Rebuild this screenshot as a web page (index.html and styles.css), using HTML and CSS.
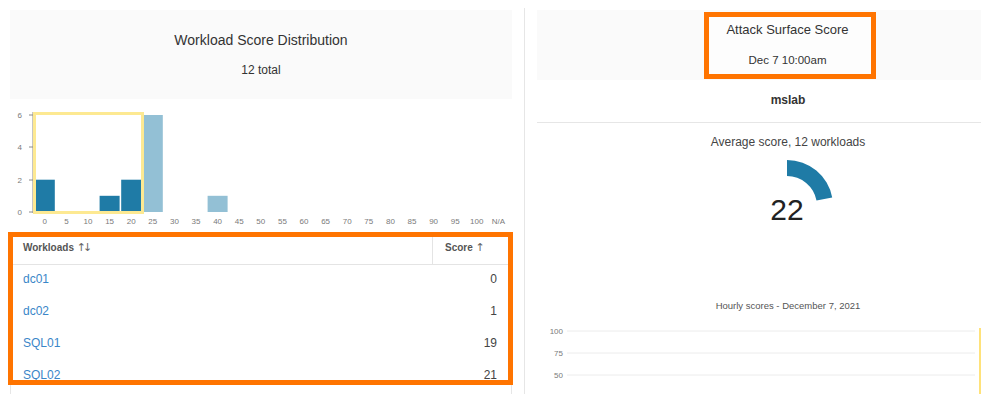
FILE: index.html
```html
<!DOCTYPE html>
<html lang="en">
<head>
    <meta charset="UTF-8">
    <meta name="viewport" content="width=device-width, initial-scale=1.0">
    <title>Workload Scores</title>
    <link rel="stylesheet" href="styles.css">
</head>
<body>
    <div class="page">
        <!-- Left: score distribution -->
        <section class="col col-left">
            <div class="card-head">
                <div class="card-title">Workload Score Distribution</div>
                <div class="card-sub">12 total</div>
            </div>

            <svg class="histogram" width="502" height="128" viewBox="10 102 502 128">
                <g class="axis">
                    <line x1="33" y1="112" x2="33" y2="213"></line>
                    <line x1="29" y1="115" x2="33" y2="115"></line>
                    <line x1="29" y1="147" x2="33" y2="147"></line>
                    <line x1="29" y1="180" x2="33" y2="180"></line>
                    <line x1="29" y1="212" x2="33" y2="212"></line>
                </g>
                <g class="tick-labels" text-anchor="end">
                    <text x="22" y="118">6</text>
                    <text x="22" y="150">4</text>
                    <text x="22" y="183">2</text>
                    <text x="22" y="215">0</text>
                </g>
                <g class="bars">
                    <rect class="bar-dark" x="34.8" y="179.7" width="20" height="32.3"></rect>
                    <rect class="bar-dark" x="99.6" y="195.8" width="20" height="16.2"></rect>
                    <rect class="bar-dark" x="121.2" y="179.7" width="20" height="32.3"></rect>
                    <rect class="bar-light" x="142.8" y="115" width="20" height="97"></rect>
                    <rect class="bar-light" x="207.6" y="195.8" width="20" height="16.2"></rect>
                </g>
                <g class="tick-labels" text-anchor="middle">
                    <text x="44.8" y="224">0</text>
                    <text x="66.4" y="224">5</text>
                    <text x="88" y="224">10</text>
                    <text x="109.6" y="224">15</text>
                    <text x="131.2" y="224">20</text>
                    <text x="152.8" y="224">25</text>
                    <text x="174.4" y="224">30</text>
                    <text x="196" y="224">35</text>
                    <text x="217.6" y="224">40</text>
                    <text x="239.2" y="224">45</text>
                    <text x="260.8" y="224">50</text>
                    <text x="282.4" y="224">55</text>
                    <text x="304" y="224">60</text>
                    <text x="325.6" y="224">65</text>
                    <text x="347.2" y="224">70</text>
                    <text x="368.8" y="224">75</text>
                    <text x="390.4" y="224">80</text>
                    <text x="412" y="224">85</text>
                    <text x="433.6" y="224">90</text>
                    <text x="455.2" y="224">95</text>
                    <text x="476.8" y="224">100</text>
                    <text x="498.4" y="224">N/A</text>
                </g>
                <!-- brush selection -->
                <rect class="brush" x="34.5" y="113.5" width="108" height="99"></rect>
            </svg>

            <div class="table-wrap">
                <table class="score-table">
                    <colgroup>
                        <col class="col-name">
                        <col class="col-score">
                    </colgroup>
                    <thead>
                        <tr>
                            <th>Workloads <span class="sort">↑↓</span></th>
                            <th class="score-head-cell">Score <span class="sort">↑</span></th>
                        </tr>
                    </thead>
                    <tbody>
                        <tr><td><a href="#">dc01</a></td><td class="num">0</td></tr>
                        <tr><td><a href="#">dc02</a></td><td class="num">1</td></tr>
                        <tr><td><a href="#">SQL01</a></td><td class="num">19</td></tr>
                        <tr><td><a href="#">SQL02</a></td><td class="num">21</td></tr>
                    </tbody>
                </table>
                <div class="highlight"></div>
            </div>
        </section>

        <!-- Right: attack surface score -->
        <section class="col col-right">
            <div class="score-head">
                <div class="score-badge">
                    <div class="badge-title">Attack Surface Score</div>
                    <div class="badge-sub">Dec 7 10:00am</div>
                </div>
            </div>

            <div class="scope-row">mslab</div>

            <div class="avg-label">Average score, 12 workloads</div>
            <svg class="gauge" width="120" height="100" viewBox="728 150 120 100">
                <path class="gauge-arc" d="M787 160 A46 46 0 0 1 832.2 197.4 L816.5 200.4 A30 30 0 0 0 787 176 Z"></path>
                <text class="gauge-value" x="787" y="220" text-anchor="middle">22</text>
            </svg>

            <div class="hourly-title">Hourly scores - December 7, 2021</div>
            <svg class="hourly" width="502" height="80" viewBox="537 318 502 80">
                <g class="grid">
                    <line x1="567" y1="331" x2="975" y2="331"></line>
                    <line x1="567" y1="353" x2="975" y2="353"></line>
                    <line x1="567" y1="375" x2="975" y2="375"></line>
                    <line x1="567" y1="397" x2="975" y2="397"></line>
                </g>
                <g class="tick-labels" text-anchor="end">
                    <text x="563" y="334">100</text>
                    <text x="563" y="356">75</text>
                    <text x="563" y="378">50</text>
                </g>
                <line class="now-line" x1="980" y1="328" x2="980" y2="398"></line>
            </svg>
        </section>
    </div>
</body>
</html>
```

FILE: styles.css
```css
html, body {
    margin: 0;
}

body {
    font-family: "Liberation Sans", Arial, sans-serif;
    color: #333333;
    background-color: #ffffff;
}

.page {
    display: flex;
    width: 981px;
    height: 394px;
    overflow: hidden;
}

.col {
    flex: none;
    width: 502px;
}

.col-left {
    margin: 0 12px 0 10px;
}

.col-right {
    margin-top: 8px;
    padding: 2px 0 0 12px;
    border-left: 1px solid #e6e6e6;
}

/* Left card */
.card-head {
    box-sizing: border-box;
    height: 89px;
    margin-top: 10px;
    padding-top: 20px;
    background-color: #fafafa;
    text-align: center;
}

.card-title {
    font-size: 14px;
    line-height: 20px;
}

.card-sub {
    margin-top: 12px;
    font-size: 12px;
    line-height: 16px;
}

.histogram {
    display: block;
    margin-top: 3px;
}

.axis line {
    stroke: #8a8a8a;
    stroke-width: 1;
}

.tick-labels {
    font-family: "Liberation Sans", Arial, sans-serif;
    font-size: 8px;
    fill: #7a7a7a;
}

.bar-dark {
    fill: #1f7ba6;
}

.bar-light {
    fill: #93c0d5;
}

.brush {
    fill: none;
    stroke: #fde992;
    stroke-width: 3;
}

/* Table */
.table-wrap {
    position: relative;
    margin-top: 2px;
    padding-bottom: 30px;
    border: 1px solid #e6e6e6;
    border-bottom: none;
}

.score-table {
    width: 500px;
    table-layout: fixed;
    border-collapse: separate;
    border-spacing: 0;
}

.col-name {
    width: 421px;
}

.col-score {
    width: 79px;
}

.score-table th {
    padding: 8px 13px 9px 12px;
    font-size: 10px;
    line-height: 14px;
    font-weight: bold;
    color: #555555;
    text-align: left;
    border-bottom: 1px solid #e4e4e4;
}

.score-table th.score-head-cell {
    border-left: 1px solid #e4e4e4;
}

.sort {
    font-family: "DejaVu Sans", sans-serif;
    font-size: 11px;
    font-weight: normal;
    letter-spacing: -3px;
    color: #666666;
}

.score-table td {
    padding: 7px 14px 11px 12px;
    font-size: 12px;
    line-height: 14px;
    color: #444444;
}

.score-table td.num {
    text-align: right;
}

.score-table a {
    color: #3a86c8;
    text-decoration: none;
}

.highlight {
    position: absolute;
    left: -3px;
    top: -1px;
    box-sizing: border-box;
    width: 505px;
    height: 153px;
    border: 5px solid #ff7400;
}

/* Right card */
.score-head {
    box-sizing: border-box;
    height: 70px;
    padding-top: 2px;
    background-color: #fafafa;
    text-align: center;
}

.score-badge {
    display: inline-block;
    box-sizing: border-box;
    width: 172px;
    height: 67px;
    margin-left: 4px;
    padding: 4px 5px 0 0;
    border: 5px solid #ff7400;
    background-color: #fdfdfd;
}

.badge-title {
    font-size: 13px;
    line-height: 18px;
}

.badge-sub {
    margin-top: 14px;
    font-size: 11.5px;
    line-height: 14px;
}

.scope-row {
    padding: 12px 0 14px;
    font-size: 12px;
    line-height: 16px;
    font-weight: bold;
    text-align: center;
    border-bottom: 1px solid #e6e6e6;
}

.avg-label {
    padding-top: 12px;
    font-size: 12px;
    line-height: 14px;
    color: #444444;
    text-align: center;
}

.gauge {
    display: block;
    margin: 1px auto 0;
}

.gauge-arc {
    fill: #1f7ba6;
}

.gauge-value {
    font-family: "Liberation Sans", Arial, sans-serif;
    font-size: 30px;
    fill: #222222;
}

.hourly-title {
    margin-top: 50px;
    font-size: 9.5px;
    line-height: 12px;
    color: #555555;
    text-align: center;
}

.hourly {
    display: block;
    margin-top: 6px;
}

.grid line {
    stroke: #ececec;
    stroke-width: 1;
}

.now-line {
    stroke: #ffe27a;
    stroke-width: 2;
}
```
